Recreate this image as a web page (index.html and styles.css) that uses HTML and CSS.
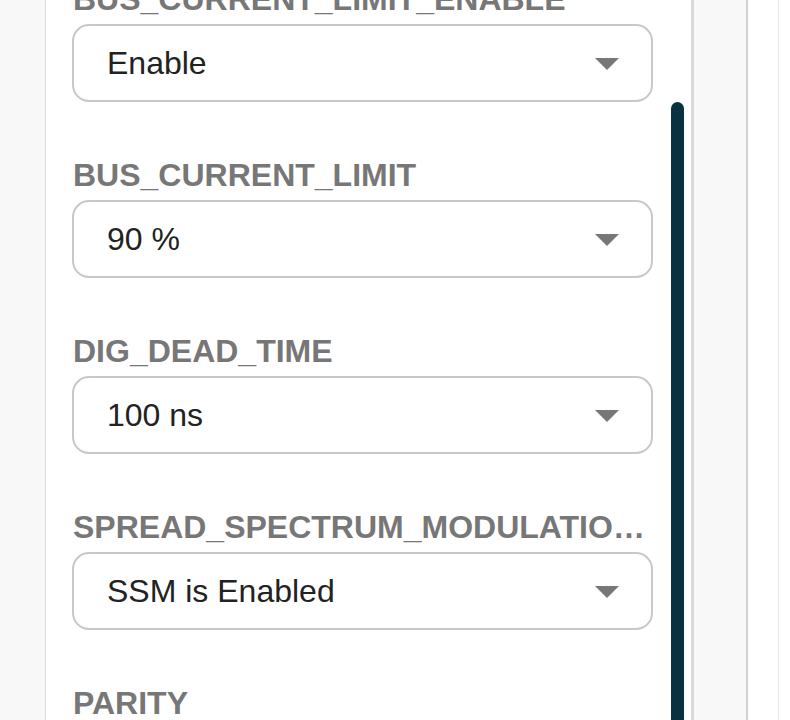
FILE: index.html
```html
<!DOCTYPE html>
<html lang="en">
<head>
<meta charset="utf-8">
<title>Settings</title>
<link rel="stylesheet" href="styles.css">
</head>
<body>
<div class="app">
  <div class="gutter"></div>
  <div class="panel">
    <div class="fields">
      <div class="field">
        <div class="label">BUS_CURRENT_LIMIT_ENABLE</div>
        <div class="select"><span class="value">Enable</span><span class="caret"></span></div>
      </div>
      <div class="field">
        <div class="label">BUS_CURRENT_LIMIT</div>
        <div class="select"><span class="value">90 %</span><span class="caret"></span></div>
      </div>
      <div class="field">
        <div class="label">DIG_DEAD_TIME</div>
        <div class="select"><span class="value">100 ns</span><span class="caret"></span></div>
      </div>
      <div class="field">
        <div class="label">SPREAD_SPECTRUM_MODULATION_ENABLE</div>
        <div class="select"><span class="value">SSM is Enabled</span><span class="caret"></span></div>
      </div>
      <div class="field">
        <div class="label">PARITY</div>
        <div class="select"><span class="value">Even</span><span class="caret"></span></div>
      </div>
    </div>
    <div class="track"><div class="thumb"></div></div>
  </div>
  <div class="side"></div>
  <div class="strip"></div>
  <div class="rest"></div>
</div>
</body>
</html>
```

FILE: styles.css
```css
html, body {
  margin: 0;
  padding: 0;
  background: #ffffff;
}
body {
  font-family: "Liberation Sans", Arial, sans-serif;
}
.app {
  display: flex;
  height: 720px;
  overflow: hidden;
}
.gutter {
  width: 45px;
  flex: none;
  background: #f8f8f8;
  border-right: 1px solid #dcdcdc;
}
.panel {
  width: 645px;
  flex: none;
  display: flex;
  background: #ffffff;
  overflow: hidden;
}
.fields {
  width: 581px;
  padding-left: 26px;
  margin-top: -19px;
  display: flex;
  flex-direction: column;
  gap: 55px;
  flex: none;
}
.field {
  display: flex;
  flex-direction: column;
  gap: 7px;
}
.label {
  font-size: 32px;
  line-height: 36px;
  font-weight: bold;
  color: #777777;
  white-space: nowrap;
  overflow: hidden;
  text-overflow: ellipsis;
  padding-left: 1px;
}
.select {
  box-sizing: border-box;
  height: 78px;
  border: 2px solid #c8c8c8;
  border-radius: 17px;
  display: flex;
  align-items: center;
  padding: 0 32px 0 33px;
}
.value {
  flex: 1;
  font-size: 32px;
  line-height: 74px;
  color: #222222;
}
.caret {
  width: 0;
  height: 0;
  border-left: 12.5px solid transparent;
  border-right: 12.5px solid transparent;
  border-top: 12px solid #777777;
  margin-top: 2px;
}
.track {
  margin-left: 18px;
  width: 13px;
  flex: none;
}
.thumb {
  margin-top: 102px;
  height: 700px;
  background: #093241;
  border-radius: 6.5px 6.5px 0 0;
}
.side {
  width: 52px;
  flex: none;
  background: #f8f8f8;
  border-left: 3px solid #d8d8d8;
  border-right: 2px solid #d0d0d0;
}
.strip {
  width: 30px;
  flex: none;
  background: #ffffff;
  border-right: 1px solid #e6e6e6;
}
.rest {
  flex: 1;
  background: #ffffff;
}
```
